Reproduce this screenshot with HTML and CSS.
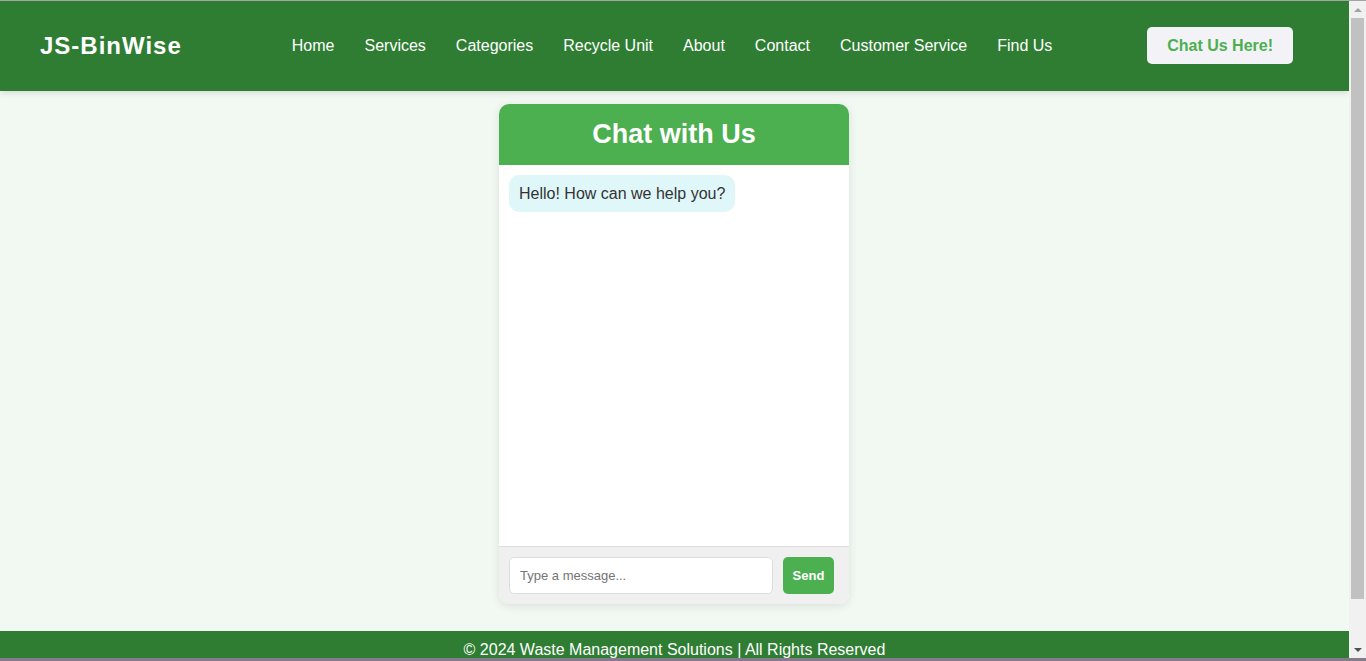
FILE: index.html
```html
<!DOCTYPE html>
<html lang="en">
<head>
<meta charset="utf-8">
<title>JS-BinWise - Chat with Us</title>
<link rel="stylesheet" href="styles.css">
</head>
<body>
<div class="window">
  <div class="viewport">
    <header class="site-header">
      <div class="logo">JS-BinWise</div>
      <nav class="main-nav">
        <a href="#">Home</a>
        <a href="#">Services</a>
        <a href="#">Categories</a>
        <a href="#">Recycle Unit</a>
        <a href="#">About</a>
        <a href="#">Contact</a>
        <a href="#">Customer Service</a>
        <a href="#">Find Us</a>
      </nav>
      <button class="chat-btn">Chat Us Here!</button>
    </header>

    <main class="page">
      <section class="chat-box">
        <h2 class="chat-title">Chat with Us</h2>
        <div class="chat-messages">
          <div class="bubble">Hello! How can we help you?</div>
        </div>
        <div class="chat-input">
          <input type="text" class="msg-input" placeholder="Type a message...">
          <button class="send-btn">Send</button>
        </div>
      </section>
    </main>

    <footer class="site-footer">
      <p>&copy; 2024 Waste Management Solutions | All Rights Reserved</p>
    </footer>
  </div>
  <div class="scrollbar" aria-hidden="true">
    <div class="sb-btn"><span class="arrow-up"></span></div>
    <div class="sb-track"><div class="sb-thumb"></div></div>
    <div class="sb-btn"><span class="arrow-down"></span></div>
  </div>
</div>
<div class="taskbar"></div>
</body>
</html>
```

FILE: styles.css
```css
* {
  box-sizing: border-box;
}

html, body {
  margin: 0;
  padding: 0;
  height: 100%;
  overflow: hidden;
}

body {
  font-family: "Liberation Sans", Arial, sans-serif;
  background: #f2f8f2;
  color: #333;
  border-top: 1px solid #a4a4a4;
  display: flex;
  flex-direction: column;
}

.window {
  flex: 1;
  min-height: 0;
  display: flex;
}

.viewport {
  flex: 1;
  min-width: 0;
  overflow: hidden;
}

.scrollbar {
  width: 17px;
  background: #f1f1f1;
  display: flex;
  flex-direction: column;
}

.sb-btn {
  height: 17px;
  display: flex;
  align-items: center;
  justify-content: center;
}

.arrow-up {
  width: 0;
  height: 0;
  border-left: 4px solid transparent;
  border-right: 4px solid transparent;
  border-bottom: 4px solid #a3a3a3;
}

.arrow-down {
  width: 0;
  height: 0;
  border-left: 4px solid transparent;
  border-right: 4px solid transparent;
  border-top: 4px solid #505050;
}

.sb-track {
  flex: 1;
  padding: 0 2px;
}

.sb-thumb {
  height: 581px;
  background: #c1c1c1;
}

.taskbar {
  height: 3px;
  background: #857b8b;
}

.site-header {
  display: flex;
  align-items: center;
  height: 90px;
  padding: 0 56px 0 40px;
  background: #2e7d32;
  box-shadow: 0 2px 6px rgba(0, 0, 0, 0.12);
  position: relative;
  z-index: 1;
}

.logo {
  color: #fff;
  font-size: 24px;
  font-weight: bold;
  letter-spacing: 1px;
}

.main-nav {
  display: flex;
  margin-left: 95px;
}

.main-nav a {
  color: #fff;
  text-decoration: none;
  font-size: 16px;
  padding: 0 15px;
}

.chat-btn {
  margin-left: auto;
  background: #f3f3f7;
  color: #4caf50;
  border: none;
  border-radius: 5px;
  font-family: "Liberation Sans", Arial, sans-serif;
  font-size: 16px;
  font-weight: bold;
  line-height: 19px;
  padding: 9px 20px;
  margin-bottom: 1px;
}

.page {
  padding: 13px 1px 27px 0;
}

.chat-box {
  width: 350px;
  height: 500px;
  margin: 0 auto;
  background: #fff;
  border-radius: 10px;
  overflow: hidden;
  box-shadow: 0 2px 10px rgba(0, 0, 0, 0.1);
  display: flex;
  flex-direction: column;
}

.chat-title {
  margin: 0;
  background: #4caf50;
  color: #fff;
  text-align: center;
  font-size: 27px;
  line-height: 31px;
  padding: 15px 0;
}

.chat-messages {
  flex: 1;
  padding: 10px;
  background: #fff;
}

.bubble {
  display: inline-block;
  background: #e0f7fa;
  color: #333;
  border-radius: 10px;
  padding: 9px 10px;
  font-size: 16px;
  line-height: 19px;
}

.chat-input {
  display: flex;
  padding: 10px 15px 10px 10px;
  background: #f0f0f0;
  border-top: 1px solid #dcdcdc;
}

.msg-input {
  flex: 1;
  height: 37px;
  padding: 10px;
  border: 1px solid #ddd;
  border-radius: 5px;
  font-family: "Liberation Sans", Arial, sans-serif;
  font-size: 13px;
  color: #333;
  background: #fff;
}

.msg-input::placeholder {
  color: #757575;
}

.send-btn {
  margin-left: 10px;
  width: 51px;
  height: 37px;
  padding: 0;
  background: #4caf50;
  color: #fff;
  border: none;
  border-radius: 5px;
  font-family: "Liberation Sans", Arial, sans-serif;
  font-size: 13px;
  font-weight: bold;
}

.site-footer {
  background: #2e7d32;
  color: #fff;
  text-align: center;
  padding: 9px 0 40px;
}

.site-footer p {
  margin: 0;
  font-size: 16px;
  line-height: 19px;
}
```
